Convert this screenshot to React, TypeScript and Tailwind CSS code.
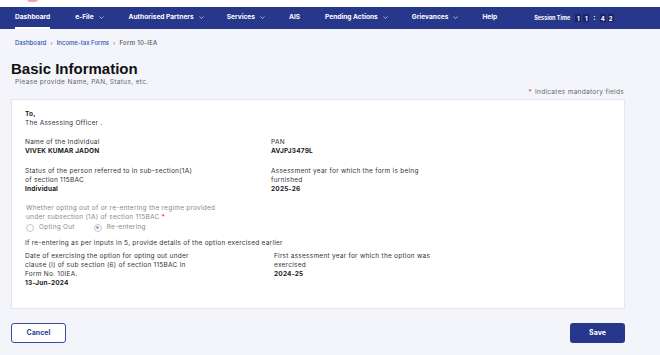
import React from "react";

const Chevron = () => (
  <svg width="5" height="3" viewBox="0 0 10 6" className="ml-[5px] -mt-[1px]" fill="none">
    <path d="M1 1l4 4 4-4" stroke="#c9cee8" strokeWidth="1.6" />
  </svg>
);

const NavItem = ({ label, dd, active }: { label: string; dd?: boolean; active?: boolean }) => (
  <div className="relative h-full flex items-center">
    <span className="font-bold text-white text-[6.6px]">{label}</span>
    {dd && <Chevron />}
    {active && <div className="absolute left-0 right-0 bottom-0 h-[2px] bg-white" />}
  </div>
);

const Digit = ({ d }: { d: string }) => (
  <span className="inline-flex items-center justify-center w-[6px] h-[8px] bg-[#1b2563] text-white font-bold text-[6px]">
    {d}
  </span>
);

const Label = ({ children, muted }: { children: React.ReactNode; muted?: boolean }) => (
  <div className={`text-[6.5px] leading-[9px] tracking-[0.25px] ${muted ? "text-[#8a8a8a]" : "text-[#333]"}`}>{children}</div>
);
const Value = ({ children }: { children: React.ReactNode }) => (
  <div className="text-[6.5px] leading-[9px] font-bold text-[#1a1a1a] tracking-[0.2px]">{children}</div>
);

const Radio = ({ checked, label }: { checked?: boolean; label: string }) => (
  <div className="flex items-center gap-[5px]">
    <span className="w-[8px] h-[8px] rounded-full border border-[#c4c7d3] bg-white flex items-center justify-center">
      {checked && <span className="w-[3px] h-[3px] rounded-full bg-[#9aa3c0]" />}
    </span>
    <span className="text-[6.5px] text-[#8a8a8a] tracking-[0.25px]">{label}</span>
  </div>
);

export default function App() {
  return (
    <div
      className="w-[660px] h-[355px] overflow-hidden bg-[#f4f5fa] flex flex-col"
      style={{ fontFamily: "Inter, 'Liberation Sans', sans-serif" }}
    >
      <div className="h-[7px] bg-white relative shrink-0">
        <div className="absolute left-[27px] top-[-4px] w-[11px] h-[6px] rounded-full bg-[#f2a3ad]" />
      </div>
      <div className="h-[22px] bg-[#27378b] flex items-center pl-[15px] shrink-0">
        <div className="h-full flex items-center">
          <NavItem label="Dashboard" active />
          <div className="w-[25px]" />
          <NavItem label="e-File" dd />
          <div className="w-[25px]" />
          <NavItem label="Authorised Partners" dd />
          <div className="w-[23px]" />
          <NavItem label="Services" dd />
          <div className="w-[24px]" />
          <NavItem label="AIS" />
          <div className="w-[25px]" />
          <NavItem label="Pending Actions" dd />
          <div className="w-[24px]" />
          <NavItem label="Grievances" dd />
          <div className="w-[24px]" />
          <NavItem label="Help" />
          <div className="w-[37px]" />
          <div className="flex items-center gap-[2px]">
            <span className="text-white font-bold text-[5.5px] mr-[3px]">Session Time</span>
            <Digit d="1" />
            <Digit d="1" />
            <span className="text-white font-bold text-[7px] mx-[2px]">:</span>
            <Digit d="4" />
            <Digit d="2" />
          </div>
        </div>
      </div>

      <div className="flex items-center gap-[4px] pl-[15px] pt-[9px] text-[6px] font-medium">
        <span className="text-[#2c50b8]">Dashboard</span>
        <span className="text-[#888]">›</span>
        <span className="text-[#2c50b8]">Income-tax Forms</span>
        <span className="text-[#888]">›</span>
        <span className="text-[#555] tracking-[0.3px]">Form 10-IEA</span>
      </div>

      <div className="pl-[11px] pt-[13px]">
        <div
          className="text-[15px] font-bold leading-[18px] text-[#111]"
          style={{ fontFamily: "'Liberation Sans', Arial, sans-serif" }}
        >
          Basic Information
        </div>
        <div className="pl-[4px] text-[6.5px] text-[#666] tracking-[0.35px] leading-[8px]">
          Please provide Name, PAN, Status, etc.
        </div>
      </div>

      <div className="flex justify-end pr-[36px] pt-[2px] text-[6.5px] text-[#666] tracking-[0.3px] leading-[8px]">
        <span className="text-[#e03a3a] mr-[3px]">*</span>Indicates mandatory fields
      </div>

      <div className="mx-[11px] w-[614px] mt-[3px] h-[210px] bg-white border border-[#e3e5ef] pl-[13px] pt-[10px] shrink-0">
        <Value>To,</Value>
        <Label>The Assessing Officer .</Label>

        <div className="grid grid-cols-[246px_1fr] mt-[10px]">
          <div>
            <Label>Name of the Individual</Label>
            <Value>VIVEK KUMAR JADON</Value>
          </div>
          <div>
            <Label>PAN</Label>
            <Value>AVJPJ3479L</Value>
          </div>
        </div>

        <div className="grid grid-cols-[246px_1fr] mt-[11px]">
          <div>
            <Label>
              Status of the person referred to in sub-section(1A)
              <br />
              of section 115BAC
            </Label>
            <Value>Individual</Value>
          </div>
          <div>
            <Label>
              Assessment year for which the form is being
              <br />
              furnished
            </Label>
            <Value>2025-26</Value>
          </div>
        </div>

        <div className="mt-[10px] pl-[1px]">
          <Label muted>
            Whether opting out of or re-entering the regime provided
            <br />
            under subsection (1A) of section 115BAC <span className="text-[#e03a3a]">*</span>
          </Label>
          <div className="flex items-center gap-[19px] mt-[1px]">
            <Radio label="Opting Out" />
            <Radio label="Re-entering" checked />
          </div>
        </div>

        <div className="mt-[6px]">
          <Label>If re-entering as per inputs in 5, provide details of the option exercised earlier</Label>
        </div>

        <div className="grid grid-cols-[249px_1fr] mt-[4px]">
          <div>
            <Label>
              Date of exercising the option for opting out under
              <br />
              clause (i) of sub section (6) of section 115BAC in
              <br />
              Form No. 10IEA.
            </Label>
            <Value>13-Jun-2024</Value>
          </div>
          <div>
            <Label>
              First assessment year for which the option was
              <br />
              exercised
            </Label>
            <Value>2024-25</Value>
          </div>
        </div>
      </div>

      <div className="flex justify-between mx-[11px] w-[614px] mt-[14px]">
        <button className="w-[55px] h-[20px] rounded-[3px] border border-[#3b4ba0] bg-white text-[#2e3f95] font-bold text-[7px]">
          Cancel
        </button>
        <button className="w-[55px] h-[20px] rounded-[3px] bg-[#27378b] text-white font-bold text-[7px]">
          Save
        </button>
      </div>
    </div>
  );
}
